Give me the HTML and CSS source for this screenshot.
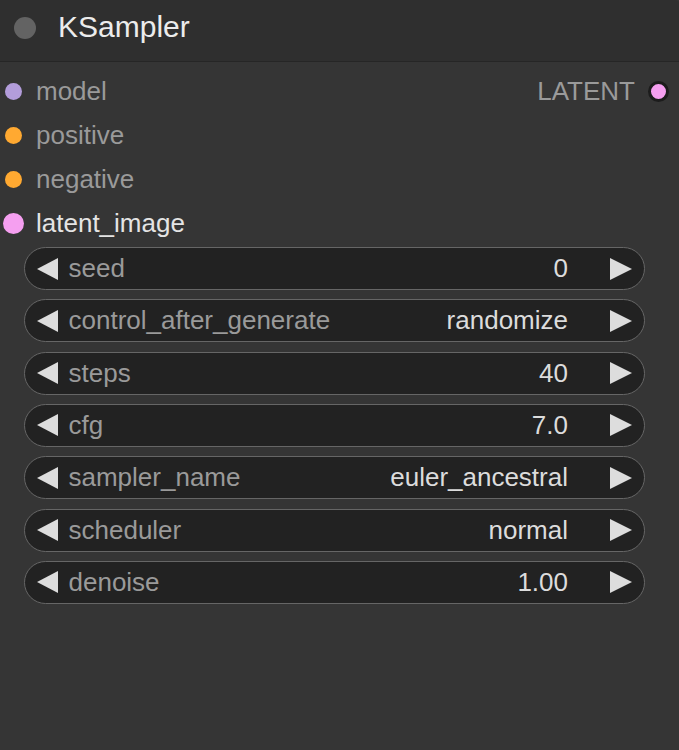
FILE: index.html
```html
<!DOCTYPE html>
<html>
<head>
<meta charset="utf-8">
<link rel="stylesheet" href="styles.css">
</head>
<body>
<div class="node">
  <div class="title">
    <span class="title-dot"></span>
    <span class="title-text">KSampler</span>
  </div>
  <div class="slots">
    <div class="row">
      <div class="slot-in"><span class="dot-wrap"><span class="dot dot-model"></span></span><span class="slot-label">model</span></div>
      <div class="slot-out"><span class="slot-label">LATENT</span><span class="out-dot"></span></div>
    </div>
    <div class="row">
      <div class="slot-in"><span class="dot-wrap"><span class="dot dot-cond"></span></span><span class="slot-label">positive</span></div>
    </div>
    <div class="row">
      <div class="slot-in"><span class="dot-wrap"><span class="dot dot-cond"></span></span><span class="slot-label">negative</span></div>
    </div>
    <div class="row">
      <div class="slot-in"><span class="dot-wrap"><span class="dot dot-latent"></span></span><span class="slot-label connected">latent_image</span></div>
    </div>
  </div>
  <div class="widgets">
    <div class="widget">
      <svg class="arrow" viewBox="0 0 21 22"><polygon points="21,0 21,22 0,11"/></svg>
      <span class="w-label">seed</span><span class="w-value">0</span>
      <svg class="arrow arrow-r" viewBox="0 0 22 22"><polygon points="0,0 0,22 22,11"/></svg>
    </div>
    <div class="widget">
      <svg class="arrow" viewBox="0 0 21 22"><polygon points="21,0 21,22 0,11"/></svg>
      <span class="w-label">control_after_generate</span><span class="w-value">randomize</span>
      <svg class="arrow arrow-r" viewBox="0 0 22 22"><polygon points="0,0 0,22 22,11"/></svg>
    </div>
    <div class="widget">
      <svg class="arrow" viewBox="0 0 21 22"><polygon points="21,0 21,22 0,11"/></svg>
      <span class="w-label">steps</span><span class="w-value">40</span>
      <svg class="arrow arrow-r" viewBox="0 0 22 22"><polygon points="0,0 0,22 22,11"/></svg>
    </div>
    <div class="widget">
      <svg class="arrow" viewBox="0 0 21 22"><polygon points="21,0 21,22 0,11"/></svg>
      <span class="w-label">cfg</span><span class="w-value">7.0</span>
      <svg class="arrow arrow-r" viewBox="0 0 22 22"><polygon points="0,0 0,22 22,11"/></svg>
    </div>
    <div class="widget">
      <svg class="arrow" viewBox="0 0 21 22"><polygon points="21,0 21,22 0,11"/></svg>
      <span class="w-label">sampler_name</span><span class="w-value">euler_ancestral</span>
      <svg class="arrow arrow-r" viewBox="0 0 22 22"><polygon points="0,0 0,22 22,11"/></svg>
    </div>
    <div class="widget">
      <svg class="arrow" viewBox="0 0 21 22"><polygon points="21,0 21,22 0,11"/></svg>
      <span class="w-label">scheduler</span><span class="w-value">normal</span>
      <svg class="arrow arrow-r" viewBox="0 0 22 22"><polygon points="0,0 0,22 22,11"/></svg>
    </div>
    <div class="widget">
      <svg class="arrow" viewBox="0 0 21 22"><polygon points="21,0 21,22 0,11"/></svg>
      <span class="w-label">denoise</span><span class="w-value">1.00</span>
      <svg class="arrow arrow-r" viewBox="0 0 22 22"><polygon points="0,0 0,22 22,11"/></svg>
    </div>
  </div>
</div>
</body>
</html>
```
FILE: styles.css
```css
* { box-sizing: border-box; }
html, body {
  margin: 0;
  padding: 0;
  background: #353535;
}
body {
  font-family: "Liberation Sans", Arial, sans-serif;
}
.node {
  width: 679px;
  height: 750px;
  background: #353535;
  border-top-right-radius: 4px;
  overflow: hidden;
}
.title {
  height: 62px;
  background: #2f2f2f;
  border-bottom: 1px solid #262626;
  display: flex;
  align-items: center;
  padding-left: 14px;
}
.title-dot {
  width: 22px;
  height: 22px;
  border-radius: 50%;
  background: #636363;
  margin-top: -6px;
}
.title-text {
  margin-left: 22px;
  font-size: 30px;
  color: #ececec;
  margin-top: -7px;
}
.slots {
  padding-top: 7px;
}
.row {
  height: 44px;
  display: flex;
  align-items: center;
  justify-content: space-between;
}
.slot-in, .slot-out {
  display: flex;
  align-items: center;
}
.dot-wrap {
  width: 27px;
  display: flex;
  justify-content: center;
  margin-right: 9px;
}
.dot {
  display: block;
  border-radius: 50%;
  width: 17px;
  height: 17px;
}
.dot-model { background: #b39ddb; }
.dot-cond { background: #ffa931; }
.dot-latent { background: #f59ff0; width: 21px; height: 21px; }
.slot-label {
  font-size: 26px;
  color: #9a9a9a;
}
.slot-label.connected { color: #e4e4e4; }
.slot-out { padding-right: 10px; }
.out-dot {
  width: 21px;
  height: 21px;
  border-radius: 50%;
  background: #f59ff0;
  border: 3px solid #1c1c1c;
  margin-left: 13px;
}
.widgets {
  padding: 2px 34px 0 24px;
  display: flex;
  flex-direction: column;
  gap: 9.33px;
}
.widget {
  height: 43px;
  border-radius: 22px;
  background: #222222;
  border: 1.5px solid #666666;
  display: flex;
  align-items: center;
  padding: 0 12px 0 12px;
}
.arrow {
  width: 21px;
  height: 22px;
  fill: #dddddd;
  flex: none;
}
.arrow-r { width: 22px; margin-left: 42px; }
.w-label {
  margin-left: 10.5px;
  font-size: 26px;
  color: #9a9a9a;
  flex: 1;
}
.w-value {
  font-size: 26px;
  color: #dcdcdc;
}
```
